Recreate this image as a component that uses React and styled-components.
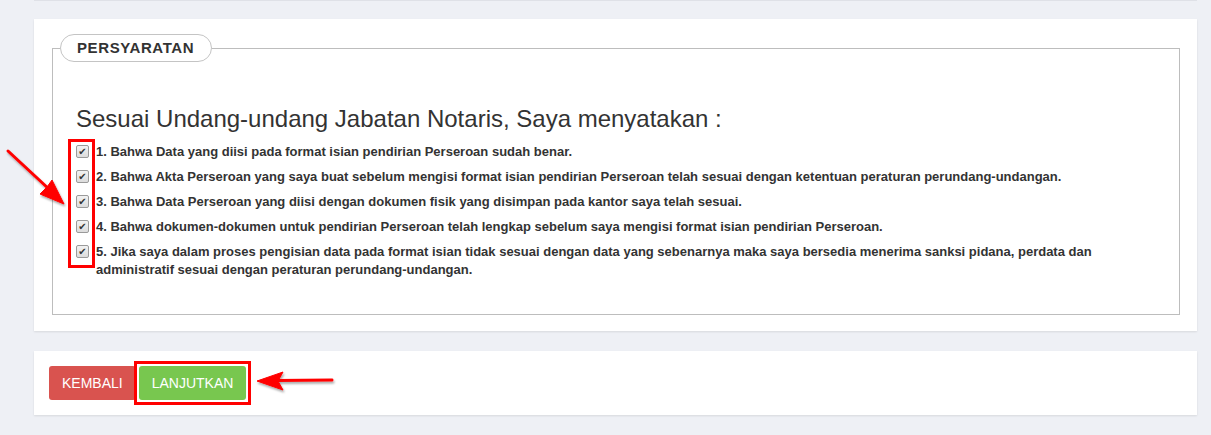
import React from "react"
import styled, { createGlobalStyle } from "styled-components"

const items = [
  "1. Bahwa Data yang diisi pada format isian pendirian Perseroan sudah benar.",
  "2. Bahwa Akta Perseroan yang saya buat sebelum mengisi format isian pendirian Perseroan telah sesuai dengan ketentuan peraturan perundang-undangan.",
  "3. Bahwa Data Perseroan yang diisi dengan dokumen fisik yang disimpan pada kantor saya telah sesuai.",
  "4. Bahwa dokumen-dokumen untuk pendirian Perseroan telah lengkap sebelum saya mengisi format isian pendirian Perseroan.",
  "5. Jika saya dalam proses pengisian data pada format isian tidak sesuai dengan data yang sebenarnya maka saya bersedia menerima sanksi pidana, perdata dan administratif sesuai dengan peraturan perundang-undangan.",
]

const App = () => {
  return (
    <Page>
      <GlobalStyle />
      <PrevCard />
      <Card>
        <Fieldset>
          <Legend>PERSYARATAN</Legend>
          <Body>
            <Heading>Sesuai Undang-undang Jabatan Notaris, Saya menyatakan :</Heading>
            <List>
              <Highlight />
              {items.map(text => (
                <Item key={text}>
                  <Check>✔</Check>
                  <span>{text}</span>
                </Item>
              ))}
            </List>
          </Body>
        </Fieldset>
      </Card>
      <ActionCard>
        <Button $bg="#d9534f">KEMBALI</Button>
        <Button $bg="#78c74f" $marked>
          LANJUTKAN
        </Button>
      </ActionCard>
      <Arrows width="1211" height="435" viewBox="0 0 1211 435">
        <defs>
          <filter id="sh" x="-20%" y="-20%" width="140%" height="140%">
            <feDropShadow dx="1" dy="2" stdDeviation="1.2" floodColor="#000" floodOpacity="0.35" />
          </filter>
        </defs>
        <g filter="url(#sh)" fill="#f00" stroke="#f00">
          <line x1="8" y1="151" x2="50" y2="190" strokeWidth="3" strokeLinecap="round" />
          <polygon points="64,204 40,194 47,187 52,180" strokeWidth="1" strokeLinejoin="round" />
          <line x1="332" y1="380" x2="276" y2="380.5" strokeWidth="3" strokeLinecap="round" />
          <polygon points="257,381 283,372 278,381 283,390" strokeWidth="1" strokeLinejoin="round" />
        </g>
      </Arrows>
    </Page>
  )
}

const GlobalStyle = createGlobalStyle`
  body {
    margin: 0;
    background: #eef0f5;
    font-family: "Liberation Sans", Arial, sans-serif;
    color: #333;
  }
`

const Page = styled.div`
  position: relative;
  width: 1211px;
  height: 435px;
  padding: 0 14px 0 34px;
  box-sizing: border-box;
  overflow: hidden;
`

const PrevCard = styled.div`
  height: 1px;
  background: #dfe1e7;
`

const Card = styled.section`
  margin-top: 18px;
  background: #fff;
  padding: 15px 17px 16px 18px;
  box-shadow: 0 1px 2px rgba(0, 0, 0, 0.1);
`

const Fieldset = styled.fieldset`
  margin: 0;
  padding: 0;
  border: 1px solid #bdbdbd;
`

const Legend = styled.legend`
  margin-left: 7px;
  height: 28px;
  box-sizing: border-box;
  padding: 0 17px 0 16px;
  border: 1px solid #c4c4c4;
  border-radius: 14px;
  font-size: 15px;
  font-weight: bold;
  letter-spacing: 0.6px;
  line-height: 26px;
  color: #333;
  background: #fff;
`

const Body = styled.div`
  padding: 44px 23px 35px;
`

const Heading = styled.h2`
  margin: 0 0 11px;
  font-size: 24px;
  font-weight: normal;
  line-height: 26px;
  color: #333;
`

const List = styled.div`
  position: relative;
  display: flex;
  flex-direction: column;
  gap: 7px;
`

const Highlight = styled.div`
  position: absolute;
  left: -8px;
  top: -4px;
  width: 27px;
  height: 129px;
  box-sizing: border-box;
  border: 3px solid #f00;
`

const Item = styled.div`
  display: flex;
  align-items: flex-start;
  font-size: 13px;
  font-weight: bold;
  line-height: 18px;
  color: #333;
`

const Check = styled.span`
  flex: none;
  width: 13px;
  height: 13px;
  margin: 2px 7px 0 0;
  box-sizing: border-box;
  border: 1px solid #9a9a9a;
  border-radius: 2px;
  background: linear-gradient(#f2f2f2, #dcdcdc);
  color: #333;
  font-family: "DejaVu Sans", sans-serif;
  font-size: 10px;
  line-height: 12px;
  text-align: center;
`

const ActionCard = styled.section`
  margin-top: 20px;
  height: 64px;
  box-sizing: border-box;
  padding: 15px;
  display: flex;
  gap: 3px;
  background: #fff;
  box-shadow: 0 1px 2px rgba(0, 0, 0, 0.1);
`

const Button = styled.button`
  position: relative;
  height: 34px;
  padding: 0 13px;
  border: none;
  border-radius: 3px;
  background: ${p => p.$bg};
  color: #fff;
  font-family: "Liberation Sans", Arial, sans-serif;
  font-size: 14px;

  &::after {
    content: "";
    display: ${p => (p.$marked ? "block" : "none")};
    position: absolute;
    inset: -5px;
    border: 3px solid #f00;
  }
`

const Arrows = styled.svg`
  position: absolute;
  left: 0;
  top: 0;
  pointer-events: none;
`

export default App
